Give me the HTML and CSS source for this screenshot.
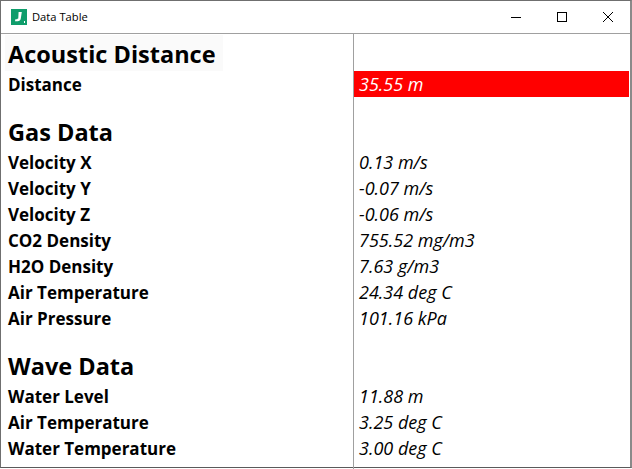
FILE: index.html
```html
<!DOCTYPE html>
<html lang="en">
<head>
<meta charset="utf-8">
<title>Data Table</title>
<link rel="stylesheet" href="styles.css">
</head>
<body>
<div class="window">
  <header class="titlebar">
    <svg class="app-icon" width="16" height="16" viewBox="0 0 16 16"><rect width="16" height="16" fill="#0f9d6b"/><path d="M7.6 3h3.2l-1 6.6c-.3 1.9-1.4 2.7-3.2 2.7H4l.4-2h1.5c1 0 1.3-.4 1.4-1.2z" fill="#fff"/><rect x="13" y="12" width="1" height="2" fill="#fff"/></svg>
    <span class="title">Data Table</span>
    <div class="controls">
      <span class="ctl"><svg width="10" height="10" viewBox="0 0 10 10"><path d="M0 5.5h10" stroke="#000" fill="none"/></svg></span>
      <span class="ctl"><svg width="10" height="10" viewBox="0 0 10 10"><rect x=".5" y=".5" width="9" height="9" stroke="#000" fill="none"/></svg></span>
      <span class="ctl"><svg width="10" height="10" viewBox="0 0 10 10"><path d="M0 0l10 10M10 0L0 10" stroke="#000" fill="none"/></svg></span>
    </div>
  </header>
  <main class="table">
    <div class="cell-l head first"><span class="head-bg">Acoustic Distance</span></div><div class="cell-r"></div>
    <div class="cell-l">Distance</div><div class="cell-r alert">35.55 m</div>
    <div class="cell-l head">Gas Data</div><div class="cell-r"></div>
    <div class="cell-l">Velocity X</div><div class="cell-r">0.13 m/s</div>
    <div class="cell-l">Velocity Y</div><div class="cell-r">-0.07 m/s</div>
    <div class="cell-l">Velocity Z</div><div class="cell-r">-0.06 m/s</div>
    <div class="cell-l">CO2 Density</div><div class="cell-r">755.52 mg/m3</div>
    <div class="cell-l">H2O Density</div><div class="cell-r">7.63 g/m3</div>
    <div class="cell-l">Air Temperature</div><div class="cell-r">24.34 deg C</div>
    <div class="cell-l">Air Pressure</div><div class="cell-r">101.16 kPa</div>
    <div class="cell-l head">Wave Data</div><div class="cell-r"></div>
    <div class="cell-l">Water Level</div><div class="cell-r">11.88 m</div>
    <div class="cell-l">Air Temperature</div><div class="cell-r">3.25 deg C</div>
    <div class="cell-l">Water Temperature</div><div class="cell-r">3.00 deg C</div>
    <div class="fill"></div><div class="fill-r"></div>
  </main>
</div>
</body>
</html>
```
FILE: styles.css
```css
* { box-sizing: border-box; }
html, body { margin: 0; height: 100%; background: #fff; }
body { overflow: hidden; }
.window {
  width: 632px; height: 468px;
  border: 1px solid #6f6f6f; border-right: 2px solid #8a8a8a; border-bottom-color: #5a5a5a;
  display: flex; flex-direction: column;
  font-family: "Open Sans", "Noto Sans", sans-serif;
  color: #000; background: #fff;
}
.titlebar {
  height: 33px; flex: none; display: flex; align-items: center;
  padding-left: 10px; border-bottom: 1px solid #a0a0a0;
}
.app-icon { flex: none; margin-top: -1px; }
.title { font-size: 11.2px; margin-left: 5px; margin-top: -1px; }
.controls { margin-left: auto; margin-right: -1px; display: flex; height: 100%; }
.ctl { width: 46px; display: flex; align-items: center; justify-content: center; padding-bottom: 1px; }
.table {
  flex: 1; display: grid; grid-template-columns: 353px 1fr;
  grid-auto-rows: 26px; grid-template-rows: 37px;
  padding-right: 1px;
}
.cell-l { font-weight: 700; padding-left: 7px; display: flex; align-items: center; border-right: 1px solid #a0a0a0; font-size: 17px; white-space: nowrap; }
.cell-r { font-style: italic; padding-left: 5px; display: flex; align-items: center; font-size: 18px; }
.cell-r.alert { background: #f00; color: #fff; }
.head { font-size: 23.5px; grid-row: span 2; align-items: flex-end; padding-bottom: 1px; }
.cell-r:empty { grid-row: span 2; border: 0; }
.head.first { grid-row: auto; align-items: stretch; padding: 0; }
.first + .cell-r { grid-row: auto; }
.head-bg { background: #fafafa; margin: 1px 0 0 4px; padding: 2px 7px 0 3px; display: flex; align-items: center; }
.table .fill { border-right: 1px solid #a0a0a0; }
```
